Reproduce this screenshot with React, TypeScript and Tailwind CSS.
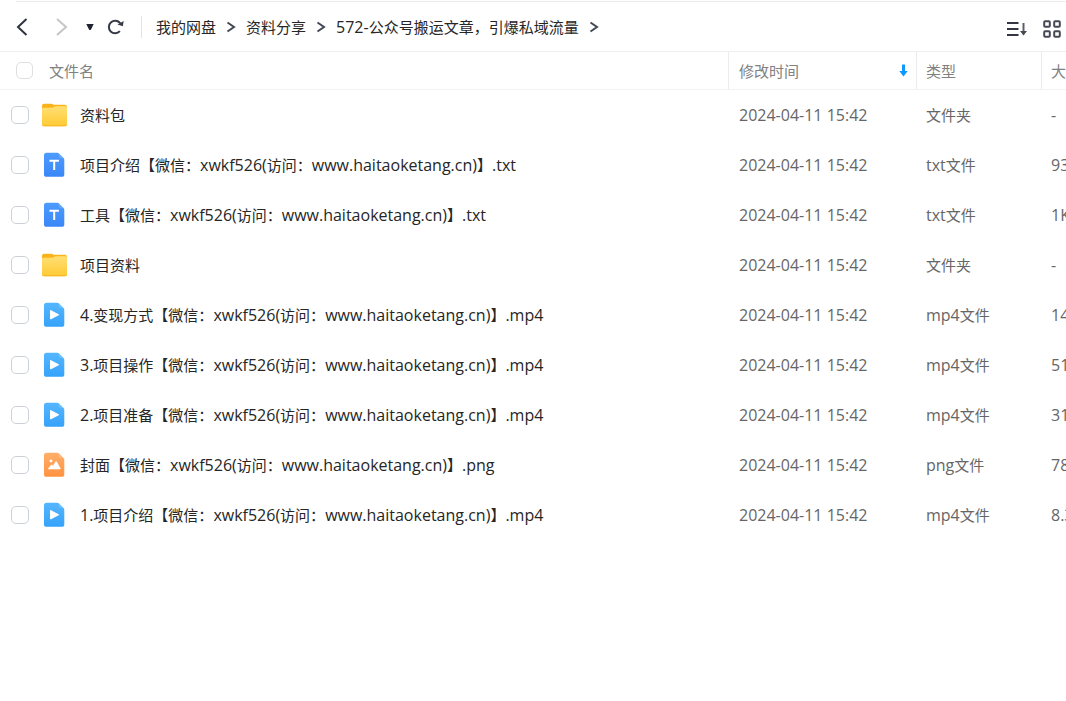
import React, { useState } from 'react';

type FileKind = 'folder' | 'txt' | 'mp4' | 'png';

interface FileItem {
  name: string;
  kind: FileKind;
  time: string;
  size: string;
}

const CRUMBS = ['我的网盘', '资料分享', '572-公众号搬运文章，引爆私域流量'];

const FILES: FileItem[] = [
  { name: '资料包', kind: 'folder', time: '2024-04-11 15:42', size: '-' },
  { name: '项目介绍【微信：xwkf526(访问：www.haitaoketang.cn)】.txt', kind: 'txt', time: '2024-04-11 15:42', size: '93B' },
  { name: '工具【微信：xwkf526(访问：www.haitaoketang.cn)】.txt', kind: 'txt', time: '2024-04-11 15:42', size: '1KB' },
  { name: '项目资料', kind: 'folder', time: '2024-04-11 15:42', size: '-' },
  { name: '4.变现方式【微信：xwkf526(访问：www.haitaoketang.cn)】.mp4', kind: 'mp4', time: '2024-04-11 15:42', size: '14MB' },
  { name: '3.项目操作【微信：xwkf526(访问：www.haitaoketang.cn)】.mp4', kind: 'mp4', time: '2024-04-11 15:42', size: '51MB' },
  { name: '2.项目准备【微信：xwkf526(访问：www.haitaoketang.cn)】.mp4', kind: 'mp4', time: '2024-04-11 15:42', size: '31MB' },
  { name: '封面【微信：xwkf526(访问：www.haitaoketang.cn)】.png', kind: 'png', time: '2024-04-11 15:42', size: '78KB' },
  { name: '1.项目介绍【微信：xwkf526(访问：www.haitaoketang.cn)】.mp4', kind: 'mp4', time: '2024-04-11 15:42', size: '8.3MB' },
];

const TYPE_LABEL: Record<FileKind, string> = {
  folder: '文件夹',
  txt: 'txt文件',
  mp4: 'mp4文件',
  png: 'png文件',
};

// Latin runs are set one step larger than the Chinese around them
const MixedText: React.FC<{ text: string }> = ({ text }) => (
  <>
    {text.split(/([\x20-\x7e]+)/).filter(Boolean).map((part, i) =>
      /^[\x20-\x7e]/.test(part) ? <span key={i} className="text-[16px]">{part}</span> : part
    )}
  </>
);

const FolderIcon: React.FC = () => (
  <svg width="26" height="24" viewBox="0 0 26 24" aria-hidden="true">
    <defs>
      <linearGradient id="folder" x1="0" y1="0" x2="0" y2="1">
        <stop offset="0" stopColor="#ffdf72" />
        <stop offset="1" stopColor="#ffca35" />
      </linearGradient>
    </defs>
    <path d="M1 3Q1 .7 3 .7H10Q11.500 .7 12.500 1.800H24Q26 2 26 4V10H1Z" fill="#fbb31c" />
    <path d="M1 6Q1 4.700 2.500 4.700H10.500Q12 4.700 13 4Q14 3.300 15 3.300H24.500Q26 3.300 26 5V21Q26 23.200 24 23.200H3Q1 23.200 1 21Z" fill="url(#folder)" />
    <path d="M1 20.500V21Q1 23.200 3 23.200H24Q26 23.200 26 21V20.500Q26 22.200 24 22.200H3Q1 22.200 1 20.500Z" fill="#f9b722" />
  </svg>
);

const COLORS = {
  txt: ['#4d9cff', '#3b86f7'],
  mp4: ['#55b6ff', '#35a2fa'],
  png: ['#ffae69', '#ff9340'],
};

const DocIcon: React.FC<{ kind: 'txt' | 'mp4' | 'png' }> = ({ kind }) => (
  <svg width="22" height="26" viewBox="0 0 22 26" aria-hidden="true">
    <defs>
      <linearGradient id={`doc-${kind}`} x1="0" y1="0" x2="0" y2="1">
        <stop offset="0" stopColor={COLORS[kind][0]} />
        <stop offset="1" stopColor={COLORS[kind][1]} />
      </linearGradient>
    </defs>
    <path d="M3.500 .8H14.200Q15.400 .8 16.300 1.700L20.400 5.800Q21.300 6.700 21.300 8V22.200Q21.300 24.800 18.800 24.800H3.500Q1 24.800 1 22.200V3.400Q1 .8 3.500 .8Z" fill={`url(#doc-${kind})`} />
    <path d="M15.800 1.300V4.300Q15.800 6.300 17.800 6.300H20.800Z" fill="#fff" opacity=".16" />
    {kind === 'txt' && <path d="M6.500 8.800H15.900M11.200 8.800V18" stroke="#fff" strokeWidth="2" fill="none" />}
    {kind === 'mp4' && <path d="M7 8.800Q7 7.800 8 8.200L15.700 12.200Q16.500 12.700 15.700 13.200L8 17.200Q7 17.600 7 16.600Z" fill="#fff" />}
    {kind === 'png' && (
      <>
        <circle cx="8" cy="8.900" r="1.400" fill="#fff" />
        <path d="M5.500 17.300Q4.800 17.300 5.300 16.300L8 12.900Q8.500 12.300 9.100 12.800L10 13.700L12.500 9.500Q13.100 8.800 13.700 9.500L17.500 16.300Q17.800 17.300 17 17.300Z" fill="#fff" />
      </>
    )}
  </svg>
);

const CrumbArrow: React.FC = () => (
  <svg width="10" height="12" viewBox="0 0 10 12" className="mx-[10px] shrink-0" fill="none" stroke="#434854" strokeWidth="2" aria-hidden="true">
    <path d="M1.500 1.500L8 6L1.500 10.500" />
  </svg>
);

const Checkbox: React.FC<{ label: string; checked: boolean; onChange: () => void; faint?: boolean }> = ({ label, checked, onChange, faint }) => (
  <input
    type="checkbox"
    aria-label={label}
    checked={checked}
    onChange={onChange}
    className={`block shrink-0 appearance-none rounded-[5px] border bg-white checked:border-[#0d99ff] checked:bg-[#0d99ff] ${faint ? 'size-[17px] border-[#dfdfe1]' : 'size-[18px] border-[#cdd2da]'}`}
  />
);

const Toolbar: React.FC = () => (
  <header className="border-b border-[#f0f0f1] pt-px">
    <div className="ml-4 flex h-[50px] items-center border-t border-[#ececee] pr-[5px] pt-px">
      <nav className="flex grow items-center" aria-label="路径">
        <button type="button" aria-label="后退">
          <svg width="12" height="18" viewBox="0 0 12 18" fill="none" stroke="#30343f" strokeWidth="2"><path d="M10.500 1L2 9L10.500 17" /></svg>
        </button>
        <button type="button" aria-label="前进" className="ml-7">
          <svg width="12" height="18" viewBox="0 0 12 18" fill="none" stroke="#c5c6c9" strokeWidth="2"><path d="M1 1L10 9L1 17" /></svg>
        </button>
        <button type="button" aria-label="历史记录" className="ml-[18px]">
          <svg width="8" height="8" viewBox="0 0 8 8"><path d="M.3 1H7.700L5 6.500Q4 7.500 3 6.500Z" fill="#20242e" /></svg>
        </button>
        <button type="button" aria-label="刷新" className="ml-[13px]">
          <svg width="17" height="16" viewBox="0 0 17 16" fill="none" stroke="#363a46" strokeWidth="2">
            <path d="M12.900 12.200A6.300 6.300 0 1 1 13.200 4.200" />
            <path d="M16.700 2L15.800 7.200L10.500 5.400Z" fill="#363a46" stroke="none" />
          </svg>
        </button>
        <span className="ml-[17px] mr-[14px] h-[22px] w-px bg-[#e3e4e6]" />
        <ol className="flex items-center text-[#262626]">
          {CRUMBS.map((crumb) => (
            <li key={crumb} className="flex items-center whitespace-nowrap">
              <a href="#" className="leading-5"><MixedText text={crumb} /></a>
              <CrumbArrow />
            </li>
          ))}
        </ol>
      </nav>
      <div className="flex items-center gap-4 pt-1">
        <button type="button" aria-label="排序">
          <svg width="20" height="16" viewBox="0 0 20 16" fill="none" stroke="#333743" strokeWidth="2">
            <path d="M0 2H11.500M0 8H11.500M0 14H11.500" />
            <path d="M16.500 2V12" stroke="#5b5e68" />
            <path d="M13 10H20L16.500 14.500Z" fill="#464a55" stroke="none" />
          </svg>
        </button>
        <button type="button" aria-label="网格视图">
          <svg width="18" height="18" viewBox="0 0 18 18" fill="none" stroke="#454954" strokeWidth="2">
            <rect x="1.200" y="1.200" width="5.600" height="5.600" rx="1" />
            <rect x="11.200" y="1.200" width="5.600" height="5.600" rx="1" />
            <rect x="1.200" y="11.200" width="5.600" height="5.600" rx="1" />
            <rect x="11.200" y="11.200" width="5.600" height="5.600" rx="1" />
          </svg>
        </button>
      </div>
    </div>
  </header>
);

const App: React.FC = () => {
  const [selected, setSelected] = useState<number[]>([]);
  const allSelected = selected.length === FILES.length;

  const toggle = (i: number) => {
    setSelected((prev) => (prev.includes(i) ? prev.filter((n) => n !== i) : [...prev, i]));
  };

  return (
    <div className="min-h-screen overflow-hidden bg-white font-['Open_Sans','Noto_Sans_CJK_SC',sans-serif] text-[15px]">
      <Toolbar />
      <table className="w-full min-w-[1161px] table-fixed border-separate border-spacing-0 text-left">
        <thead>
          <tr className="h-[38px] text-[#818181]">
            <th className="border-b border-[#f3f3f4] p-0 pl-4 font-normal">
              <div className="flex items-center">
                <Checkbox label="全选" faint checked={allSelected} onChange={() => setSelected(allSelected ? [] : FILES.map((_, i) => i))} />
                <span className="ml-4 leading-5">文件名</span>
              </div>
            </th>
            <th className="w-[188px] border-b border-l border-b-[#f3f3f4] border-l-[#ececee] p-0 pl-[10px] pr-2 font-normal">
              <button type="button" className="flex w-full items-center justify-between leading-5">
                修改时间
                <svg width="9" height="13" viewBox="0 0 9 13" aria-hidden="true">
                  <path d="M3 .5H6V7H8.700L4.500 12.500L.3 7H3Z" fill="#0d99ff" />
                </svg>
              </button>
            </th>
            <th className="w-[125px] border-b border-l border-b-[#f3f3f4] border-l-[#ececee] p-0 pl-[9px] font-normal leading-5">类型</th>
            <th className="w-[120px] border-b border-l border-b-[#f3f3f4] border-l-[#ececee] p-0 pl-[9px] font-normal leading-5">大小</th>
          </tr>
        </thead>
        <tbody>
          {FILES.map((file, i) => (
            <tr key={file.name} className="h-[50px] text-[#666] hover:bg-[#f7f9fc]">
              <td className="p-0 pl-[11px]">
                <div className="flex items-center">
                  <Checkbox label={file.name} checked={selected.includes(i)} onChange={() => toggle(i)} />
                  <span className="ml-3 flex w-[26px] justify-center">
                    {file.kind === 'folder' ? <FolderIcon /> : <DocIcon kind={file.kind} />}
                  </span>
                  <span className="ml-[13px] whitespace-nowrap leading-5 text-[#262626]"><MixedText text={file.name} /></span>
                </div>
              </td>
              <td className="p-0 pl-[11px] leading-5"><MixedText text={file.time} /></td>
              <td className="p-0 pl-[10px] leading-5"><MixedText text={TYPE_LABEL[file.kind]} /></td>
              <td className="p-0 pl-[10px] leading-5"><MixedText text={file.size} /></td>
            </tr>
          ))}
        </tbody>
      </table>
    </div>
  );
};

export default App;
